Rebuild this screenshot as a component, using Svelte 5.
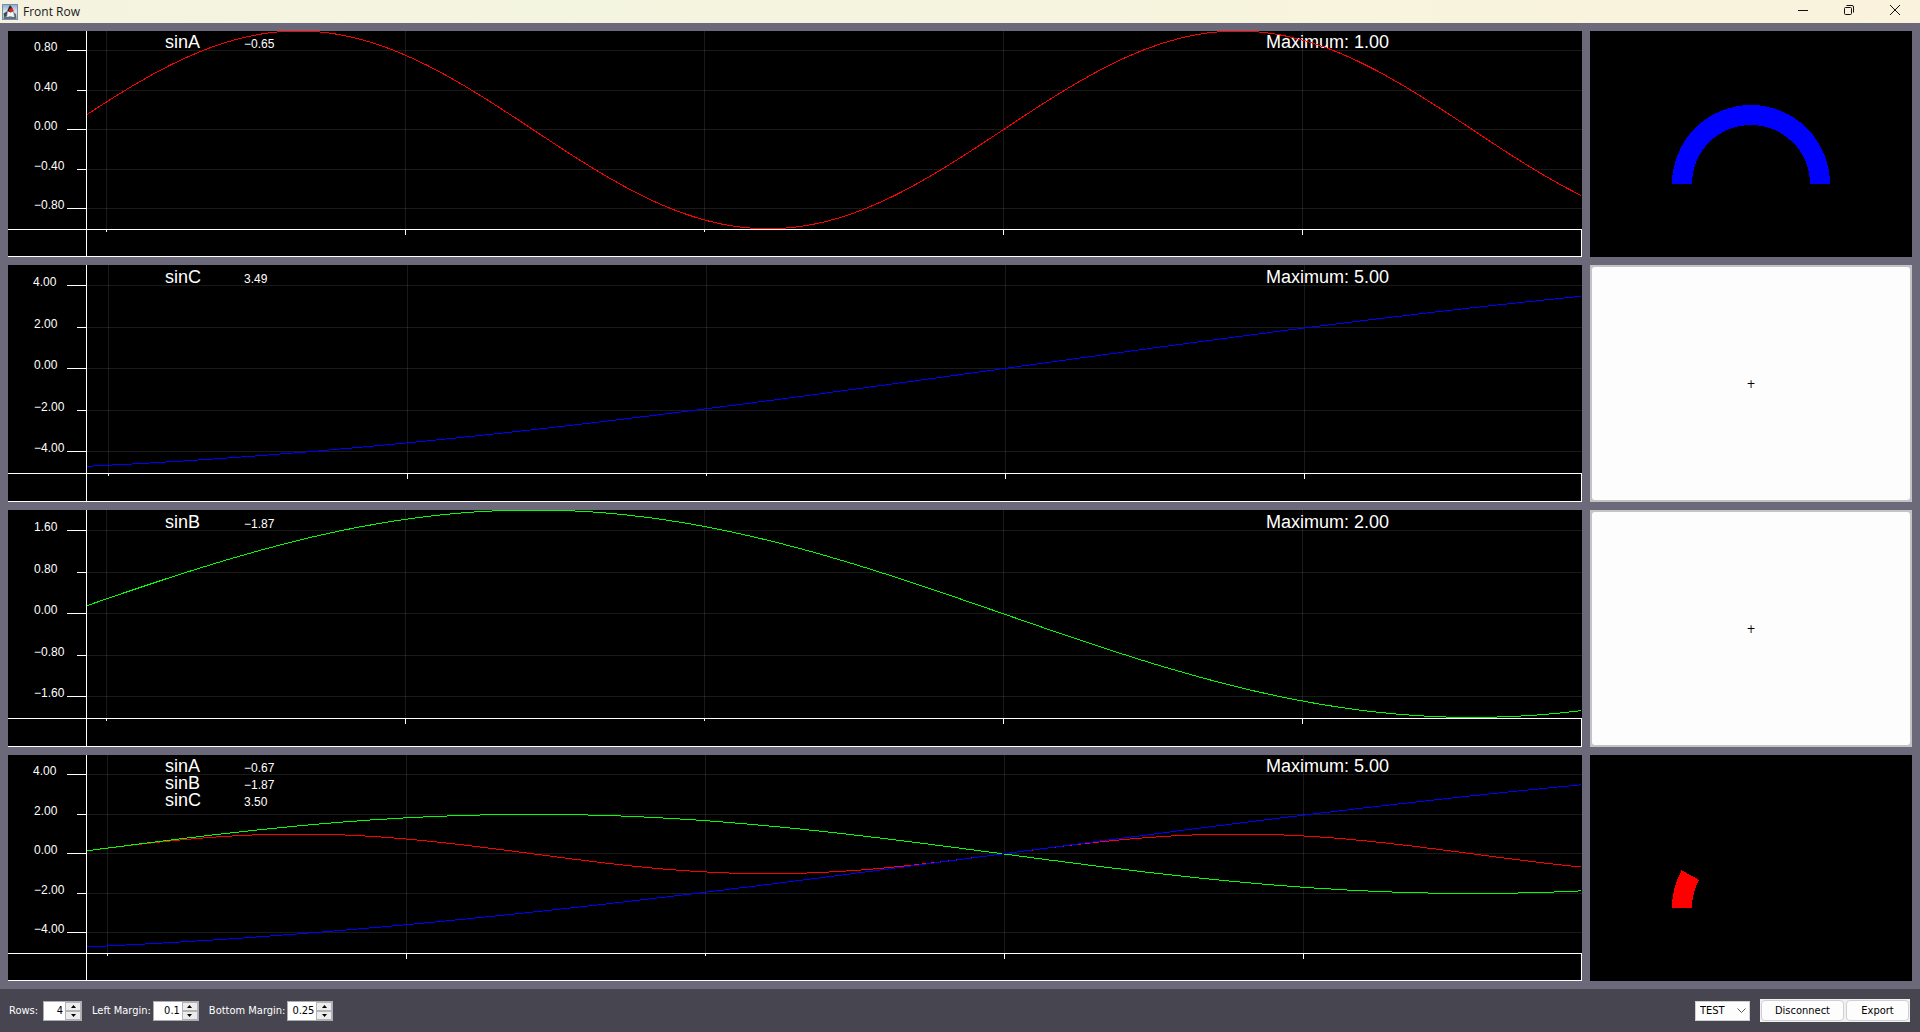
<script>
  const minus = (n) => n.toFixed(2).replace('-', '\u2212');

  const waves = {
    sinA: { color: '#ff0000', fn: (t) => Math.sin(2 * t) },
    sinB: { color: '#00ff00', fn: (t) => -2 * Math.sin(t) },
    sinC: { color: '#0000ff', fn: (t) => 5 * Math.sin(0.4 * t) }
  };

  // firstTick: distance of the first vertical division from the value axis
  const charts = $state([
    { id: 'a', max: 1, firstTick: 20, series: [['sinA', -0.65]], width: 0, height: 0 },
    { id: 'c', max: 5, firstTick: 22, series: [['sinC', 3.49]], width: 0, height: 0 },
    { id: 'b', max: 2, firstTick: 20, series: [['sinB', -1.87]], width: 0, height: 0 },
    { id: 'all', max: 5, firstTick: 21, series: [['sinA', -0.67], ['sinB', -1.87], ['sinC', 3.5]], width: 0, height: 0 }
  ]);

  const leftMargin = 0.05;
  const bottomMargin = 0.125;

  function layout(chart) {
    const { width: w, height: h, max } = chart;
    const axisX = Math.floor(w * leftMargin);
    const plotH = h * (1 - bottomMargin);
    const step = Math.floor(w * 0.19);
    const mid = plotH / 2;
    const yTicks = [0.8, 0.4, 0, -0.4, -0.8].map((r, i) => ({
      label: minus(r * max),
      y: Math.floor(mid * (1 - r)),
      length: i % 2 ? 9 : 19
    }));
    const xTicks = [2, 5, 2, 5, 5].map((length, i) => ({
      x: axisX + chart.firstTick + step * i,
      length
    }));
    const zero = axisX + 20 + step * 3;
    const curves = chart.series.map(([name]) => {
      const pts = [];
      for (let x = axisX + 1; x < w; x += 3) {
        const v = waves[name].fn((x - zero) / step) / max;
        pts.push(`${x},${(mid * (1 - v)).toFixed(1)}`);
      }
      return { name, color: waves[name].color, points: pts.join(' ') };
    });
    return { w, h, axisX, bottom: Math.floor(plotH) + 1, yTicks, xTicks, curves, line: h * 0.075 };
  }

  // Ring segment that starts at the left and sweeps clockwise by deg
  function arc(deg) {
    const a = Math.PI - (deg * Math.PI) / 180;
    const p = (r) => `${(80 + r * Math.cos(a)).toFixed(2)} ${(80 - r * Math.sin(a)).toFixed(2)}`;
    return `M1 80A79 79 0 0 1 ${p(79)}L${p(59)}A59 59 0 0 0 21 80Z`;
  }

  const side = [
    { kind: 'dial', deg: 180, color: '#0000ff', name: 'sinA dial' },
    { kind: 'add' },
    { kind: 'add' },
    { kind: 'dial', deg: 28.5, color: '#ff0000', name: 'sinC dial' }
  ];

  const spinners = $state([
    { id: 'rows', label: 'Rows:', value: '4', step: 1, digits: 0, size: 'narrow' },
    { id: 'left', label: 'Left Margin:', value: '0.1', step: 0.1, digits: 1, size: 'wide' },
    { id: 'bottom', label: 'Bottom Margin:', value: '0.25', step: 0.05, digits: 2, size: 'wide' }
  ]);

  function bump(s, dir) {
    s.value = (Number(s.value) + dir * s.step).toFixed(s.digits);
  }
</script>

<div class="window">
  <header>
    <svg class="logo" viewBox="0 0 16 16" aria-hidden="true">
      <defs>
        <linearGradient id="tile" x1="0" y1="0" x2="0" y2="1">
          <stop offset="0" stop-color="#8fabc8" />
          <stop offset="0.5" stop-color="#dde6ee" />
          <stop offset="1" stop-color="#93aac0" />
        </linearGradient>
      </defs>
      <rect x="0.5" y="0.5" width="15" height="15" fill="url(#tile)" stroke="#7490ad" />
      <path d="M5.4 7L1.6 9.6L2.4 13.4L5.4 11.4Z" fill="#3f464d" />
      <path d="M11.2 8L13.8 10L14.2 13.6L11.6 12.4Z" fill="#59636c" />
      <path d="M8 1.5C6.5 4 5 8 4.6 14L8 12.3L12.6 14C12.4 9 10.5 4 8 1.5Z" fill="#f4f6f8" stroke="#6a7580" stroke-width="0.6" />
      <path d="M8 1.2C7 2.6 6.2 4.4 5.4 7L8.6 8.6L11.4 6.8C10.4 4.4 9.2 2.4 8 1.2Z" fill="#26282c" />
      <path d="M2 14H14" stroke="#4c555e" stroke-width="1.4" />
      <ellipse cx="9.2" cy="6.2" rx="2.1" ry="2" fill="#e8231c" />
    </svg>
    <h1>Front Row</h1>
    <div class="controls">
      <button aria-label="Minimize">
        <svg viewBox="0 0 12 12"><path d="M1 6.5H11" /></svg>
      </button>
      <button aria-label="Restore">
        <svg viewBox="0 0 12 12">
          <rect x="1.5" y="3.5" width="7" height="7" rx="1" />
          <path d="M3.5 1.5H9Q10.5 1.5 10.5 3V8.5" />
        </svg>
      </button>
      <button aria-label="Close">
        <svg viewBox="0 0 12 12"><path d="M1 1L11 11M11 1L1 11" /></svg>
      </button>
    </div>
  </header>

  <main>
    {#each charts as chart, i (chart.id)}
      {@const g = layout(chart)}
      <section class="chart" bind:clientWidth={chart.width} bind:clientHeight={chart.height}>
        {#if g.w}
          <svg viewBox="0 0 {g.w} {g.h}" shape-rendering="crispEdges">
            {#each g.yTicks as t}
              <rect class="grid" x={g.axisX + 1} y={t.y} width={g.w - g.axisX - 1} height="1" />
              <rect class="ink" x={g.axisX - t.length} y={t.y} width={t.length} height="1" />
              <text class="value" x={t.label[0] === '4' ? 25 : 26} y={t.y + 1}>{t.label}</text>
            {/each}
            {#each g.xTicks as t}
              <rect class="grid" x={t.x} y="0" width="1" height={g.bottom} />
              <rect class="ink" x={t.x} y={g.bottom + 1} width="1" height={t.length} />
            {/each}
            <rect class="ink" x="0" y={g.bottom} width={g.w} height="1" />
            <rect class="ink" x="0" y={g.h - 1} width={g.w} height="1" />
            <rect class="ink" x={g.w - 1} y={g.bottom} width="1" height={g.h - g.bottom} />
            <rect class="ink" x={g.axisX} y="0" width="1" height={g.h} />
            {#each chart.series as [name, value], n}
              <text class="title" x={Math.round(g.w * 0.1)} y={Math.round(g.line * (n + 1))}>{name}</text>
              <text class="value" x={Math.round(g.w * 0.15)} y={Math.round(g.line * (n + 1))}>{minus(value)}</text>
            {/each}
            <text class="title" x={Math.floor(g.w * 0.8) - 1} y={Math.round(g.line)}>Maximum: {chart.max.toFixed(2)}</text>
            {#each g.curves as c (c.name)}
              <polyline points={c.points} fill="none" stroke={c.color} stroke-width="1" />
            {/each}
          </svg>
        {/if}
      </section>

      {#if side[i].kind === 'dial'}
        <section class="dial">
          <svg viewBox="0 0 160 81" role="img" aria-label={side[i].name} shape-rendering="crispEdges">
            <path d={arc(side[i].deg)} fill={side[i].color} />
          </svg>
        </section>
      {:else}
        <button class="add"><span>+</span></button>
      {/if}
    {/each}
  </main>

  <footer>
    {#each spinners as s (s.id)}
      <div class="field">
        <label for={s.id}>{s.label}</label>
        <div class="spinner {s.size}">
          <input id={s.id} type="text" bind:value={s.value} />
          <div class="arrows">
            <button aria-label="Increase {s.label}" onclick={() => bump(s, 1)}>
              <svg viewBox="0 0 5 3"><path d="M0 3L2.5 0L5 3Z" /></svg>
            </button>
            <button aria-label="Decrease {s.label}" onclick={() => bump(s, -1)}>
              <svg viewBox="0 0 5 3"><path d="M0 0L2.5 3L5 0Z" /></svg>
            </button>
          </div>
        </div>
      </div>
    {/each}
    <div class="port">
      <select aria-label="Port">
        <option>TEST</option>
      </select>
      <svg viewBox="0 0 9 5" aria-hidden="true"><path d="M0.5 0.5L4.5 4.5L8.5 0.5" /></svg>
    </div>
    <div class="actions">
      <button>Disconnect</button>
      <button>Export</button>
    </div>
  </footer>
</div>

<style>
  :global(body) {
    margin: 0;
  }

  .window {
    display: flex;
    flex-direction: column;
    height: 100vh;
    min-height: 480px;
    background: #6c6a7a;
    font-family: 'DejaVu Sans Condensed', 'DejaVu Sans', sans-serif;
    font-size: 11px;
  }

  button,
  input,
  select {
    box-sizing: border-box;
    margin: 0;
    padding: 0;
    border: 0;
    border-radius: 0;
    font: inherit;
    color: #000;
  }

  header {
    display: flex;
    align-items: center;
    flex: none;
    height: 23px;
    padding-left: 2px;
    background: linear-gradient(90deg, #f5f3e0, #f4f5e0 30%, #f8f4de 70%, #faf2dd);
  }

  .logo {
    width: 16px;
    height: 16px;
  }

  h1 {
    flex: 1;
    margin: 0 0 0 5px;
    font: 400 12px/16px 'Open Sans', sans-serif;
    color: #1a1a1a;
  }

  .controls {
    display: flex;
    align-self: stretch;
    padding-right: 2px;
  }

  .controls button {
    display: flex;
    justify-content: center;
    width: 46px;
    padding-top: 4px;
    background: none;
  }

  .controls svg {
    width: 12px;
    height: 12px;
    fill: none;
    stroke: #111;
  }

  main {
    display: grid;
    flex: 1;
    min-height: 0;
    grid-template-columns: minmax(0, 1574fr) minmax(0, 322fr);
    grid-template-rows: minmax(0, 226fr) minmax(0, 237fr) minmax(0, 237fr) minmax(0, 226fr);
    gap: 8px;
    padding: 8px;
  }

  .chart {
    overflow: hidden;
    background: #000;
  }

  .chart svg {
    display: block;
    width: 100%;
    height: 100%;
    font-family: 'Liberation Sans', Arial, sans-serif;
  }

  .chart text {
    fill: #fff;
  }

  .value {
    font-size: 12px;
  }

  .title {
    font-size: 18px;
  }

  .grid {
    fill: #fff;
    fill-opacity: 0.1;
  }

  .ink {
    fill: #fff;
  }

  .dial {
    display: flex;
    align-items: center;
    justify-content: center;
    overflow: hidden;
    background: #000;
  }

  .dial svg {
    width: 160px;
    height: 81px;
  }

  .add {
    display: flex;
    padding: 2px;
    background: #c4c4c4;
    font-size: 12px;
  }

  .add span {
    display: flex;
    flex: 1;
    align-self: stretch;
    align-items: center;
    justify-content: center;
    border-radius: 3px;
    background: #fdfdfd;
  }

  footer {
    display: flex;
    align-items: center;
    flex: none;
    box-sizing: border-box;
    height: 43px;
    padding: 0 10px 0 9px;
    background: #464550;
  }

  .field {
    display: flex;
    align-items: center;
    gap: 2px;
    margin-right: 10px;
    color: #fff;
    white-space: nowrap;
  }

  .field label {
    min-width: 32px;
  }

  .spinner {
    display: flex;
    box-sizing: border-box;
    height: 20px;
    border: 1px solid #abadb3;
    background: #fff;
  }

  .narrow {
    width: 39px;
  }

  .wide {
    width: 46px;
  }

  .spinner input {
    flex: 1;
    width: 0;
    padding-right: 2px;
    background: none;
    text-align: right;
  }

  .arrows {
    display: flex;
    flex-direction: column;
    flex: none;
    width: 16px;
  }

  .arrows button {
    display: flex;
    flex: 1;
    align-items: center;
    justify-content: center;
    border: 1px solid #b4b4b4;
    background: #ececec;
  }

  .arrows svg {
    width: 5px;
    height: 3px;
  }

  .port {
    display: grid;
    align-items: center;
    margin-left: auto;
    margin-right: 10px;
  }

  .port select,
  .port svg {
    grid-area: 1 / 1;
  }

  .port select {
    width: 55px;
    height: 20px;
    padding-left: 4px;
    border: 1px solid #d0d0d0;
    background: #fdfdfd;
    appearance: none;
  }

  .port svg {
    justify-self: end;
    width: 9px;
    height: 5px;
    margin-right: 4px;
    fill: none;
    stroke: #555;
    pointer-events: none;
  }

  .actions {
    display: flex;
    gap: 2px;
    padding: 1px;
    background: #f0f0f0;
  }

  .actions button {
    height: 21px;
    border: 1px solid #d0d0d0;
    border-radius: 4px;
    background: #fdfdfd;
  }

  .actions button:first-child {
    width: 83px;
  }

  .actions button:last-child {
    width: 63px;
  }
</style>
